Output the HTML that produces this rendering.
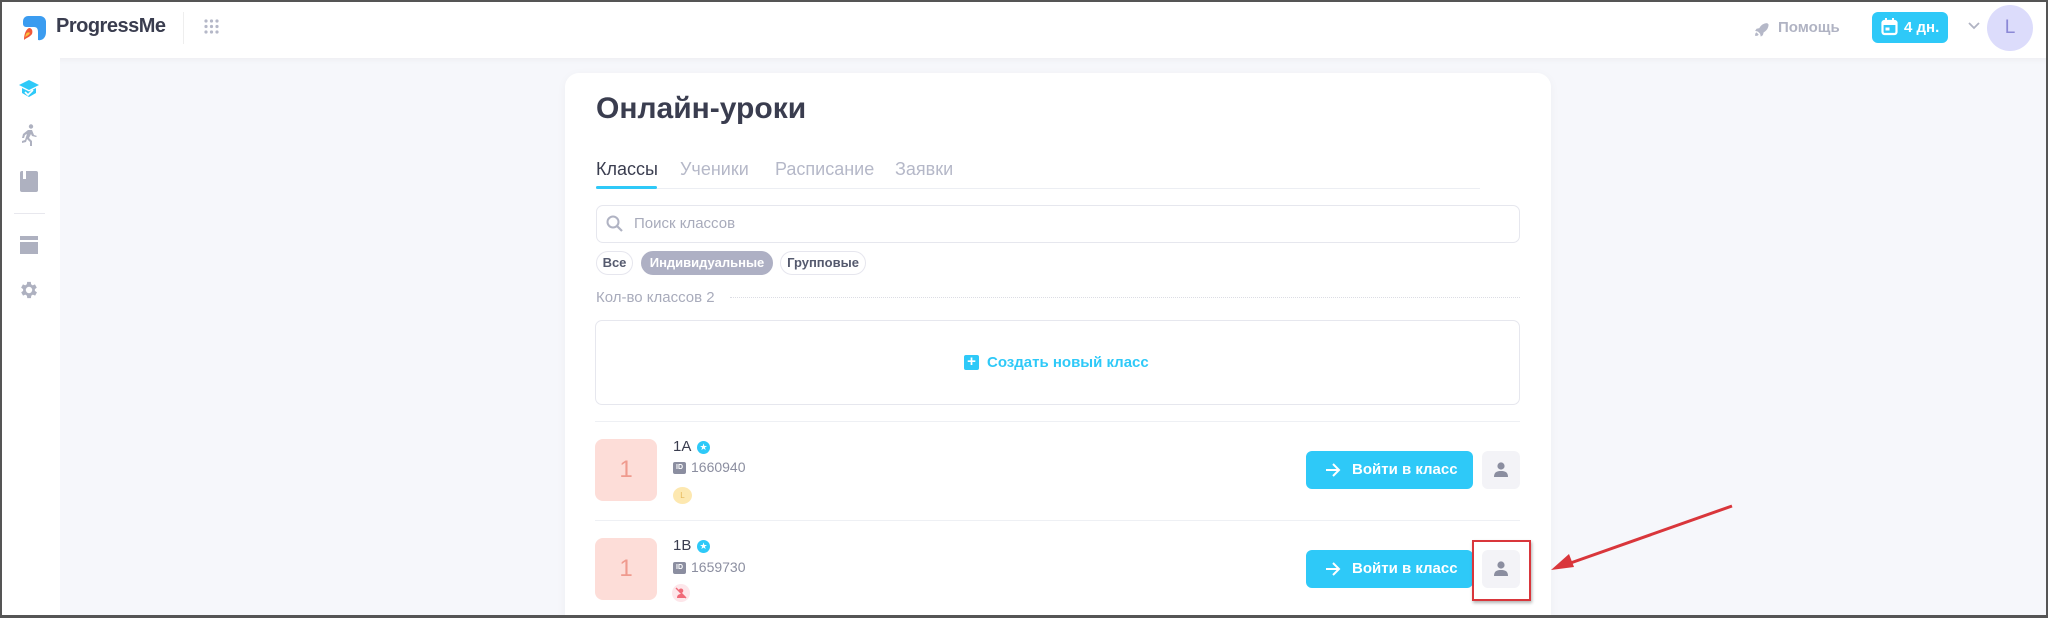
<!DOCTYPE html>
<html><head><meta charset="utf-8"><style>
*{box-sizing:border-box;margin:0;padding:0}
html,body{width:2048px;height:618px;overflow:hidden}
body{background:#f6f7fb;font-family:"Liberation Sans","DejaVu Sans",sans-serif}
#w{position:relative;width:2048px;height:618px;overflow:hidden;background:#f6f7fb}
.a{position:absolute}
.hdr{left:0;top:0;width:2048px;height:58px;background:#fff;box-shadow:0 2px 6px rgba(0,0,0,.04)}
.side{left:0;top:58px;width:60px;height:560px;background:#fff}
.card{left:565px;top:73px;width:986px;height:560px;background:#fff;border-radius:14px;box-shadow:0 2px 10px rgba(0,0,0,.04)}
.t{white-space:nowrap}
.chip{height:24px;border-radius:12px;border:1px solid #e6e6ee;font-size:13px;font-weight:bold;color:#555a6e;line-height:22px;text-align:center}
.btn{background:#2ec9f8;border-radius:6px;color:#fff;font-weight:bold;font-size:15px;line-height:38px;height:38px;width:167px;padding-left:46px}
.ub{width:38px;height:38px;border-radius:6px;background:#f3f3f7}
.box{width:62px;height:62px;border-radius:8px;background:#fdddd8;color:#ef9a8e;font-size:24px;text-align:center;line-height:62px}
.frame{left:0;top:0;width:2048px;height:618px;border:2px solid #555;border-bottom:3px solid #555;pointer-events:none}
</style></head><body><div id="w">
<div class="a hdr"></div>
<div class="a side"></div>
<svg class="a" style="left:20px;top:14px" width="28" height="28" viewBox="0 0 28 28"><path d="M8 2h12a6 6 0 0 1 6 6v10c0 6-4 9-8 8v-8c0-3-1-5-4-5H6a3 3 0 0 1-3-3V7a5 5 0 0 1 5-5z" fill="#3b9cf0"/><path d="M9 14c3 0 4 3 3 6-2 3-6 4-8 6 0-4 1-10 5-12z" fill="#f0583a"/><path d="M6 20c1-2 3-2 4-1-1 2-3 3-5 4z" fill="#fbc03a"/></svg>
<div class="a t" style="left:56px;top:15px;font-size:20px;font-weight:bold;color:#3a3d4f;letter-spacing:-0.5px">ProgressMe</div>
<div class="a" style="left:183px;top:12px;width:1px;height:32px;background:#eee"></div>
<svg class="a" style="left:204px;top:19px" width="15" height="15"><g fill="#b5b8c8"><circle cx="2" cy="2" r="1.6"/><circle cx="7.5" cy="2" r="1.6"/><circle cx="13" cy="2" r="1.6"/><circle cx="2" cy="7.5" r="1.6"/><circle cx="7.5" cy="7.5" r="1.6"/><circle cx="13" cy="7.5" r="1.6"/><circle cx="2" cy="13" r="1.6"/><circle cx="7.5" cy="13" r="1.6"/><circle cx="13" cy="13" r="1.6"/></g></svg>
<svg class="a" style="left:1753px;top:21px" width="17" height="17" viewBox="0 0 24 24"><path d="M20 3c-5 0-9 3-11 7l-4 1-2 3 4 1 3 3 1 4 3-2 1-4c4-2 7-6 7-11zM5 16c-2 1-2 3-2 5 2 0 4 0 5-2z" fill="#b5b8c8"/></svg>
<div class="a t" style="left:1778px;top:19px;font-size:15px;font-weight:bold;color:#b0b3c3">Помощь</div>
<div class="a" style="left:1872px;top:12px;width:76px;height:31px;background:#2ec9f8;border-radius:6px"></div>
<svg class="a" style="left:1881px;top:18px" width="17" height="18" viewBox="0 0 17 18"><rect x="1.5" y="3" width="14" height="13" rx="2" fill="none" stroke="#fff" stroke-width="2.2"/><rect x="1.5" y="3" width="14" height="4" fill="#fff"/><rect x="4" y="0" width="2" height="4" fill="#fff"/><rect x="11" y="0" width="2" height="4" fill="#fff"/><rect x="4.5" y="9.5" width="4" height="3" fill="#fff"/></svg>
<div class="a t" style="left:1904px;top:19px;font-size:15px;font-weight:bold;color:#fff">4 дн.</div>
<svg class="a" style="left:1968px;top:22px" width="12" height="8"><path d="M1 1l5 5 5-5" fill="none" stroke="#b0b3c3" stroke-width="1.8"/></svg>
<div class="a" style="left:1987px;top:5px;width:46px;height:46px;border-radius:50%;background:#dcdcfb;color:#8b88d6;font-size:19px;text-align:center;line-height:46px">L</div>
<svg class="a" style="left:18px;top:78px" width="22" height="22" viewBox="0 0 22 22"><path d="M11 2L1 7l10 5 10-5z" fill="#2ec9f8"/><path d="M4 10v5l7 4 7-4v-5l-7 3.5z" fill="#2ec9f8"/><path d="M7 14l3 3 5-5" stroke="#fff" stroke-width="1.6" fill="none"/></svg>
<svg class="a" style="left:19px;top:124px" width="20" height="22" viewBox="0 0 20 22"><circle cx="12" cy="2.5" r="2.2" fill="#aeb1c0"/><path d="M9 6l4 0 2 5 3 1-1 1-4-1-1-2-2 4 3 3v6h-2v-5l-3-3-1 3-4 1 0-2 3-1 2-6-2 1-1 3H3l1-4z" fill="#aeb1c0"/></svg>
<div class="a" style="left:20px;top:171px;width:18px;height:21px;border-radius:2px;background:#aeb1c0"></div>
<div class="a" style="left:23px;top:171px;width:3px;height:8px;background:#fff"></div>
<div class="a" style="left:14px;top:213px;width:31px;height:1px;background:#e8e8ee"></div>
<div class="a" style="left:20px;top:236px;width:18px;height:4px;background:#aeb1c0"></div>
<div class="a" style="left:20px;top:242px;width:18px;height:12px;background:#aeb1c0"></div>
<svg class="a" style="left:18px;top:279px" width="22" height="22" viewBox="0 0 24 24"><path fill="#aeb1c0" d="M19.4 13a7.8 7.8 0 0 0 0-2l2.1-1.6-2-3.5-2.5 1a7.6 7.6 0 0 0-1.7-1L15 3.2h-4l-.4 2.7a7.6 7.6 0 0 0-1.7 1l-2.5-1-2 3.5L6.6 11a7.8 7.8 0 0 0 0 2l-2.1 1.6 2 3.5 2.5-1a7.6 7.6 0 0 0 1.7 1l.4 2.7h4l.4-2.7a7.6 7.6 0 0 0 1.7-1l2.5 1 2-3.5zM13 15.5a3.5 3.5 0 1 1 0-7 3.5 3.5 0 0 1 0 7z" transform="translate(-1 0)"/></svg>
<div class="a card"></div>
<div class="a t" style="left:596px;top:92px;font-size:30px;font-weight:bold;color:#3a3d4f">Онлайн-уроки</div>
<div class="a" style="left:596px;top:188px;width:884px;height:1px;background:#eceef3"></div>
<div class="a t" style="left:596px;top:159px;font-size:18px;color:#3a3d4f">Классы</div>
<div class="a" style="left:596px;top:186px;width:61px;height:3px;background:#2ec9f8;border-radius:2px"></div>
<div class="a t" style="left:680px;top:159px;font-size:18px;color:#b5b8c8">Ученики</div>
<div class="a t" style="left:775px;top:159px;font-size:18px;color:#b5b8c8">Расписание</div>
<div class="a t" style="left:895px;top:159px;font-size:18px;color:#b5b8c8">Заявки</div>
<div class="a" style="left:596px;top:205px;width:924px;height:38px;border:1px solid #e6e7ee;border-radius:7px"></div>
<svg class="a" style="left:606px;top:215px" width="17" height="17"><circle cx="7" cy="7" r="5.5" fill="none" stroke="#b0b3c3" stroke-width="2"/><path d="M11 11l5 5" stroke="#b0b3c3" stroke-width="2.2"/></svg>
<div class="a t" style="left:634px;top:215px;font-size:15px;color:#a8abbb">Поиск классов</div>
<div class="a chip" style="left:596px;top:251px;width:37px">Все</div>
<div class="a chip" style="left:641px;top:251px;width:132px;background:#aeb0c4;border-color:#aeb0c4;color:#fff">Индивидуальные</div>
<div class="a chip" style="left:780px;top:251px;width:86px">Групповые</div>
<div class="a t" style="left:596px;top:289px;font-size:15px;color:#a8abbb">Кол-во классов 2</div>
<div class="a" style="left:730px;top:297px;width:790px;border-top:1px dotted #dcdde4"></div>
<div class="a" style="left:595px;top:320px;width:925px;height:85px;border:1px solid #e6e7ee;border-radius:7px"></div>
<div class="a" style="left:964px;top:355px;width:15px;height:15px;background:#2ec9f8;border-radius:2px;color:#fff;font-size:15px;line-height:14px;text-align:center;font-weight:bold">+</div>
<div class="a t" style="left:987px;top:354px;font-size:15px;font-weight:bold;color:#2ec9f8">Создать новый класс</div>
<div class="a" style="left:595px;top:421px;width:925px;height:1px;background:#eef0f4"></div>
<div class="a" style="left:595px;top:520px;width:925px;height:1px;background:#eef0f4"></div>
<div class="a box" style="left:595px;top:439px">1</div>
<div class="a t" style="left:673px;top:438px;font-size:15px;color:#3a3d4f">1A</div>
<div class="a" style="left:697px;top:441px;width:13px;height:13px;border-radius:50%;background:#2ec9f8;color:#fff;font-size:9px;text-align:center;line-height:13px">★</div>
<div class="a" style="left:673px;top:462px;width:13px;height:12px;border-radius:2px;background:#8b8ea0;color:#fff;font-size:7px;font-weight:bold;text-align:center;line-height:12px">ID</div>
<div class="a t" style="left:691px;top:459px;font-size:14px;color:#8b8ea0">1660940</div>
<div class="a" style="left:673px;top:487px;width:19px;height:17px;border-radius:50%;background:#fde8b0;color:#e6b85a;font-size:8px;text-align:center;line-height:17px">L</div>
<div class="a btn" style="left:1306px;top:451px">Войти в класс</div>
<svg class="a" style="left:1325px;top:462px" width="16" height="16"><path d="M1 8h13M8 2l6 6-6 6" fill="none" stroke="#fff" stroke-width="2"/></svg>
<div class="a ub" style="left:1482px;top:451px"></div>
<svg class="a" style="left:1493px;top:461px" width="16" height="17"><circle cx="8" cy="5" r="3.6" fill="#8b8ea0"/><path d="M1 16c0-5 3-6 7-6s7 1 7 6z" fill="#8b8ea0"/></svg>
<div class="a box" style="left:595px;top:538px">1</div>
<div class="a t" style="left:673px;top:537px;font-size:15px;color:#3a3d4f">1B</div>
<div class="a" style="left:697px;top:540px;width:13px;height:13px;border-radius:50%;background:#2ec9f8;color:#fff;font-size:9px;text-align:center;line-height:13px">★</div>
<div class="a" style="left:673px;top:562px;width:13px;height:12px;border-radius:2px;background:#8b8ea0;color:#fff;font-size:7px;font-weight:bold;text-align:center;line-height:12px">ID</div>
<div class="a t" style="left:691px;top:559px;font-size:14px;color:#8b8ea0">1659730</div>
<div class="a" style="left:672px;top:584px;width:18px;height:18px;border-radius:50%;background:#fde6ea"></div>
<svg class="a" style="left:675px;top:587px" width="12" height="12"><path d="M2 11c0-3 2-4 4-4s4 1 4 4z M6 1.5a2.3 2.3 0 1 1 0 4.6 2.3 2.3 0 0 1 0-4.6z" fill="#f06a78"/><path d="M1 1l10 10" stroke="#f06a78" stroke-width="1.4"/></svg>
<div class="a btn" style="left:1306px;top:550px">Войти в класс</div>
<svg class="a" style="left:1325px;top:561px" width="16" height="16"><path d="M1 8h13M8 2l6 6-6 6" fill="none" stroke="#fff" stroke-width="2"/></svg>
<div class="a ub" style="left:1482px;top:550px"></div>
<svg class="a" style="left:1493px;top:560px" width="16" height="17"><circle cx="8" cy="5" r="3.6" fill="#8b8ea0"/><path d="M1 16c0-5 3-6 7-6s7 1 7 6z" fill="#8b8ea0"/></svg>
<div class="a" style="left:1472px;top:540px;width:59px;height:61px;border:2px solid #d9363b;box-shadow:1px 2px 3px rgba(0,0,0,.3)"></div>
<svg class="a" style="left:1540px;top:495px" width="200" height="85"><path d="M192 11L22 71" stroke="#d9363b" stroke-width="3"/><path d="M11 75l18-16 5 13z" fill="#d9363b"/></svg>
<div class="a frame"></div>
</div></body></html>
